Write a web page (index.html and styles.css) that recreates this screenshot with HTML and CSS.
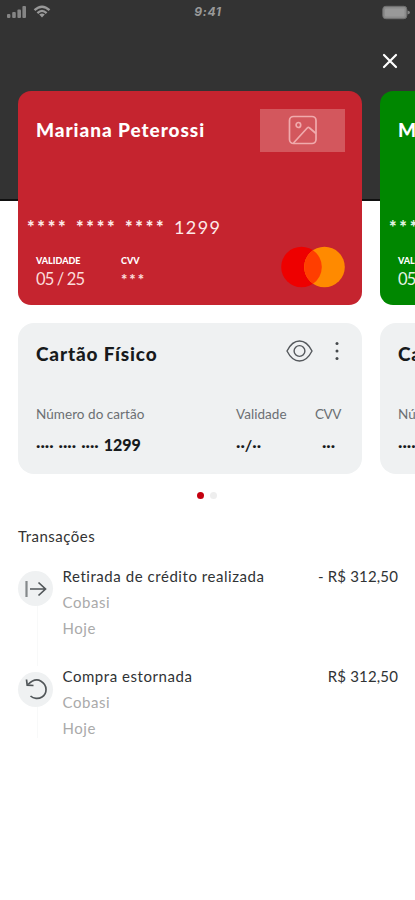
FILE: index.html
```html
<!DOCTYPE html>
<html lang="pt-BR">
<head>
<meta charset="utf-8">
<meta name="viewport" content="width=device-width, initial-scale=1">
<title>Cartões</title>
<link rel="stylesheet" href="styles.css">
</head>
<body>
<header class="top">
  <div class="status">
    <svg class="signal" width="46" height="16" viewBox="0 0 46 16">
      <g fill="#858585"><rect x="0" y="10" width="3.4" height="4" rx="1"/><rect x="5.2" y="8" width="3.6" height="6" rx="1"/><rect x="10.4" y="5.5" width="3.6" height="8.500" rx="1"/><rect x="15.400" y="2" width="3.600" height="12" rx="1"/></g>
      <g fill="none" stroke="#999" stroke-width="2.300"><path d="M27.500 6.200Q35 -.8 42.500 6.200"/><path d="M30.400 9.100Q35 4.700 39.600 9.100"/></g>
      <path d="M32.200 10.600Q35 8.200 37.800 10.600L35 13.600Z" fill="#999"/>
    </svg>
    <span class="time">9:41</span>
    <svg class="battery" width="28" height="15" viewBox="0 0 28 15"><rect x=".8" y="1.300" width="24" height="12.400" rx="3" fill="#8b8b8b" stroke="#707070"/><rect x="3" y="3.500" width="19.500" height="8" rx="1" fill="#999"/><path d="M25.500 5.500Q28 6 28 7.500T25.500 9.500Z" fill="#858585"/></svg>
  </div>
  <svg class="close" width="16" height="16" viewBox="0 0 16 16"><path d="M2 2L14 14M14 2L2 14" stroke="#fff" stroke-width="2.200" stroke-linecap="round"/></svg>
</header>

<main>
  <section class="carousel">
    <div class="slide">
      <article class="card red">
        <div class="card-head">
          <h2 class="title">Mariana Peterossi</h2>
          <div class="picture">
            <svg width="30" height="30" viewBox="0 0 30 30" fill="none" stroke="#f0aaac" stroke-width="1.700" stroke-linejoin="round"><rect x="1.500" y="1.500" width="26.500" height="27" rx="4"/><ellipse cx="10.400" cy="10" rx="2.300" ry="2.500"/><path d="M5.500 28L19.200 13Q20.400 11.800 21.600 13L28 18.500"/></svg>
          </div>
        </div>
        <div class="number"><span>****</span><span>****</span><span>****</span><b>1299</b></div>
        <div class="card-foot">
          <div class="field"><span class="tag">VALIDADE</span><span class="val">05 / 25</span></div>
          <div class="field"><span class="tag">CVV</span><span class="val stars">***</span></div>
          <svg class="brand" width="64" height="42" viewBox="0 0 64 42"><circle cx="20.500" cy="21" r="20.300" fill="#ee0000"/><circle cx="43.500" cy="21" r="20.300" fill="#ff8a00"/><path d="M32 4.270A20.300 20.300 0 0 1 32 37.730A20.300 20.300 0 0 1 32 4.270Z" fill="#ff3e00"/></svg>
        </div>
      </article>
      <article class="physical">
        <div class="phys-head">
          <h2 class="title">Cartão Físico</h2>
          <svg width="27" height="22" viewBox="0 0 27 22" fill="none" stroke="#54585c" stroke-width="1.400"><path d="M1 11Q6 1 13.500 1T26 11Q21 21 13.500 21T1 11Z"/><circle cx="13.500" cy="11" r="5.400"/></svg>
          <svg class="more" width="4" height="20" viewBox="0 0 4 20" fill="#45494c"><circle cx="2" cy="2.500" r="1.500"/><circle cx="2" cy="10" r="1.500"/><circle cx="2" cy="17.500" r="1.500"/></svg>
        </div>
        <div class="phys-data">
          <div class="col"><span class="lab">Número do cartão</span><span class="dots"><i>····</i><i>····</i><i>····</i><b>1299</b></span></div>
          <div class="col"><span class="lab">Validade</span><span class="dots"><i>··/··</i></span></div>
          <div class="col mid"><span class="lab">CVV</span><span class="dots"><i>···</i></span></div>
        </div>
      </article>
    </div>
    <div class="slide">
      <article class="card green">
        <div class="card-head"><h2 class="title">Mariana Peterossi</h2></div>
        <div class="number"><span>****</span></div>
        <div class="card-foot">
          <div class="field"><span class="tag">VALIDADE</span><span class="val">05 / 25</span></div>
        </div>
      </article>
      <article class="physical">
        <div class="phys-head"><h2 class="title">Cartão Físico</h2></div>
        <div class="phys-data">
          <div class="col"><span class="lab">Número do cartão</span><span class="dots"><i>····</i></span></div>
        </div>
      </article>
    </div>
  </section>

  <div class="pager"><span class="on"></span><span></span></div>

  <section class="history">
    <h3>Transações</h3>
    <div class="row">
      <div class="rail"><div class="bubble"><svg width="22" height="20" viewBox="0 0 22 20" fill="none" stroke="#515659" stroke-width="1.700"><path d="M1.500 2V18" stroke="#84898b" stroke-width="2.200"/><path d="M5 10H20.500M13.500 3.500L20.500 10L13.500 16.500"/></svg></div></div>
      <div class="info"><p class="what">Retirada de crédito realizada</p><p>Cobasi</p><p>Hoje</p></div>
      <p class="amount">- R$ 312,50</p>
    </div>
    <div class="row">
      <div class="rail"><div class="bubble"><svg width="22" height="22" viewBox="0 0 22 22" fill="none" stroke="#515659" stroke-width="1.700"><path d="M3 6.500C7 2.500 12 .8 16 3.200C22.500 7 22.500 15.500 17 19C13.500 21.200 8.500 20.800 5.500 18"/><path d="M1.500 1.500L2.200 7.200L8.500 7.500"/></svg></div></div>
      <div class="info"><p class="what">Compra estornada</p><p>Cobasi</p><p>Hoje</p></div>
      <p class="amount">R$ 312,50</p>
    </div>
  </section>
</main>
</body>
</html>
```

FILE: styles.css
```css
* { box-sizing: border-box; }
body {
  margin: 0;
  height: 900px;
  overflow: hidden;
  background: #fff;
  color: #171a1c;
  font-family: Lato, "Open Sans", sans-serif;
}
h2, h3, p { margin: 0; }
svg { display: block; flex: none; }

.top {
  height: 201px;
  background: #333;
  border-bottom: 2px solid #111;
}
.status {
  display: grid;
  grid-template-columns: 1fr auto 1fr;
  align-items: center;
  height: 24px;
  padding: 0 5px 0 7px;
}
.signal { margin-top: -1px; }
.time {
  margin-right: 1px;
  font: italic 700 12px/14px Inter, sans-serif;
  color: #999;
  letter-spacing: .7px;
}
.battery { justify-self: end; }
.close { margin: 29px 17px 0 auto; }

.carousel {
  position: relative;
  display: flex;
  gap: 18px;
  margin-top: -110px;
  padding-left: 18px;
  overflow: hidden;
}
.slide { flex: 0 0 344px; }
.title {
  font-size: 19px;
  line-height: 24px;
  font-weight: 900;
  white-space: nowrap;
}
.card {
  height: 214px;
  padding: 17px 17px 0 18px;
  border-radius: 13px;
  color: #fff;
}
.red { background: #c5242f; }
.green { background: #008700; }
.card-head {
  display: flex;
  justify-content: space-between;
  align-items: center;
  height: 44px;
}
.card .title { letter-spacing: .95px; }
.picture {
  display: flex;
  align-items: center;
  justify-content: center;
  width: 85px;
  height: 43px;
  background: #d3575d;
}
.number {
  display: grid;
  grid-template-columns: 49px 49px 49px auto;
  margin: 63px 0 0 -9px;
  height: 24px;
  font-size: 18px;
  line-height: 24px;
  color: #fde9e8;
}
.number span { font-size: 18px; line-height: 25px; font-weight: 900; letter-spacing: 2.700px; }
.number b { font-weight: 400; letter-spacing: 1.400px; }
.card-foot {
  display: grid;
  grid-template-columns: 85px 1fr auto;
  margin-top: 7px;
}
.field { display: flex; flex-direction: column; padding-top: 9px; }
.tag { font-size: 9px; line-height: 11px; font-weight: 900; }
.val { font-size: 16.500px; line-height: 20px; margin-top: 3px; color: #fbdcda; letter-spacing: -.85px; }
.green .val, .green .number { color: #e4f3e4; }
.field .stars { font-size: 15px; font-weight: 900; letter-spacing: 2px; }

.physical {
  height: 151px;
  margin-top: 18px;
  padding: 17px 18px 0;
  border-radius: 16px;
  background: #eff1f2;
}
.phys-head { display: flex; align-items: center; height: 24px; }
.phys-head .title { flex: 1; padding-top: 4px; letter-spacing: .85px; }
.phys-head svg { margin-top: -3px; }
.more { margin: 0 5px 0 22px; }
.phys-data { display: grid; grid-template-columns: 200px 79px 27px; margin-top: 41px; }
.col { display: flex; flex-direction: column; white-space: nowrap; }
.mid .dots { justify-content: center; }
.lab { font-size: 13.500px; line-height: 18px; color: #6b6f72; letter-spacing: .05px; }
.mid .lab { letter-spacing: -.4px; }
.dots { display: flex; gap: 5px; margin-top: 12px; font-size: 16px; line-height: 20px; }
.dots i { font-style: normal; font-weight: 700; }
.dots b { font-weight: 900; }

.pager { display: flex; justify-content: center; gap: 6px; margin: 18px 1px 0 0; }
.pager span { width: 7px; height: 7px; border-radius: 50%; background: #eee; }
.pager .on { background: #c4000f; }

.history { padding: 27px 17px 0 18px; }
.history h3 { font-size: 15px; line-height: 20px; font-weight: 400; color: #333; letter-spacing: .5px; }
.row { display: flex; height: 100.500px; }
.history h3 + .row { margin-top: 19px; }
.rail {
  width: 35px;
  margin-right: 9.500px;
  padding-top: 6px;
  background: linear-gradient(#f8f9f9, #f8f9f9) 19px 30px / 1px 100% no-repeat;
}
.row:last-child .rail { background-size: 1px 42px; }
.bubble {
  display: flex;
  align-items: center;
  justify-content: center;
  width: 35px;
  height: 35px;
  border-radius: 50%;
  background: #eff1f2;
}
.info { flex: 1; }
.row p { font-size: 15px; line-height: 26px; color: #aaa; letter-spacing: .55px; }
.row .info, .row .amount { margin-top: -2.500px; }
.row .what, .row .amount { color: #303335; }
.row .amount { letter-spacing: .15px; }
```
